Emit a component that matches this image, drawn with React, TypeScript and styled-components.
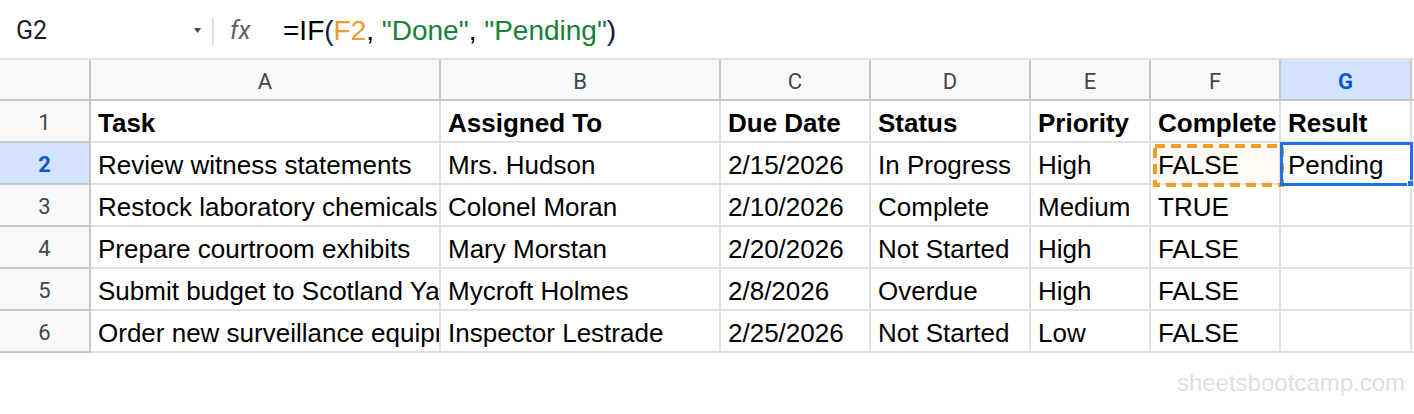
import React from "react";
import styled, { createGlobalStyle, css } from "styled-components";

const GlobalStyle = createGlobalStyle`
  html, body { margin: 0; padding: 0; background: #ffffff; }
  body { font-family: "Liberation Sans", Arial, sans-serif; }
`;

const Page = styled.div`
  width: 1414px;
  height: 414px;
  overflow: hidden;
  display: flex;
  flex-direction: column;
  background: #fff;
`;

const FormulaBar = styled.div`
  height: 58px;
  padding-top: 3px;
  box-sizing: border-box;
  display: flex;
  align-items: center;
`;

const NameBox = styled.div`
  width: 212px;
  box-sizing: border-box;
  padding: 0 11px 0 16px;
  display: flex;
  align-items: center;
  justify-content: space-between;
  font-family: Roboto, "Liberation Sans", sans-serif;
  font-size: 25px;
  color: #1f1f1f;
`;

const Separator = styled.div`
  width: 2px;
  height: 28px;
  background: #e0e0e0;
`;

const FxLabel = styled.span`
  margin-left: 16px;
  font-family: Roboto, "Liberation Sans", sans-serif;
  font-style: italic;
  font-size: 25px;
  color: #5f6368;
  width: 35px;
`;

const Formula = styled.div`
  margin-left: 18px;
  font-family: "Liberation Sans", Arial, sans-serif;
  font-size: 28px;
  color: #000;
  white-space: pre;
`;

const Tok = styled.span<{ $kind: "ref" | "str" | "paren" }>`
  color: ${(p) =>
    p.$kind === "ref" ? "#f29a2e" : p.$kind === "str" ? "#188038" : "#0d1b3e"};
`;

const Sheet = styled.div`
  display: grid;
  grid-template-columns: 91px 350px 280px 150px 160px 120px 130px 131px 2px;
  border-top: 2px solid #e1e1e1;
`;

const headerFont = css`
  font-family: Roboto, "Liberation Sans", sans-serif;
  font-size: 22px;
`;

const Corner = styled.div`
  box-sizing: border-box;
  height: 41px;
  background: #f8f9fa;
  border-right: 2px solid #c7c7c7;
  border-bottom: 2px solid #c7c7c7;
`;

const ColHeader = styled.div<{ $active?: boolean; $last?: boolean }>`
  box-sizing: border-box;
  height: 41px;
  padding-top: 4px;
  display: flex;
  align-items: center;
  justify-content: center;
  ${headerFont};
  background: ${(p) => (p.$active ? "#d3e3fd" : "#f8f9fa")};
  color: ${(p) => (p.$active ? "#0b57d0" : "#444746")};
  font-weight: ${(p) => (p.$active ? 700 : 400)};
  border-right: ${(p) => (p.$last ? "none" : "2px solid #c7c7c7")};
  border-bottom: 2px solid #c7c7c7;
`;

const RowHeader = styled.div<{ $active?: boolean }>`
  box-sizing: border-box;
  height: 42px;
  padding-top: 3px;
  display: flex;
  align-items: center;
  justify-content: center;
  ${headerFont};
  background: ${(p) => (p.$active ? "#d3e3fd" : "#f8f9fa")};
  color: ${(p) => (p.$active ? "#0b57d0" : "#444746")};
  font-weight: ${(p) => (p.$active ? 700 : 400)};
  border-right: 2px solid #c7c7c7;
  border-bottom: 2px solid #c7c7c7;
`;

const Cell = styled.div<{ $bold?: boolean; $copied?: boolean; $last?: boolean }>`
  position: relative;
  box-sizing: border-box;
  height: 42px;
  padding: 4px 0 0 7px;
  line-height: 36px;
  font-family: "Liberation Sans", Arial, sans-serif;
  font-size: 26px;
  font-weight: ${(p) => (p.$bold ? 700 : 400)};
  color: #000;
  white-space: nowrap;
  overflow: ${(p) => (p.$copied ? "visible" : "hidden")};
  background: ${(p) => (p.$copied ? "#fffaf3" : "#fff")};
  border-right: ${(p) => (p.$last ? "none" : "2px solid #e1e1e1")};
  border-bottom: 2px solid #e1e1e1;
`;

const SelectedCell = styled(Cell)`
  overflow: visible;
`;

const Clip = styled.span`
  display: block;
  overflow: hidden;
`;

const Marquee = styled.svg`
  position: absolute;
  left: 2px;
  top: 1px;
  z-index: 2;
  pointer-events: none;
`;

const Selection = styled.div`
  position: absolute;
  left: -1px;
  top: -1px;
  right: -3px;
  bottom: -3px;
  border: 3px solid #1a73e8;
  z-index: 3;
  pointer-events: none;
`;

const FillHandle = styled.div`
  position: absolute;
  right: -4px;
  bottom: -4px;
  width: 5px;
  height: 5px;
  background: #1a73e8;
  border: 1px solid #fff;
`;

const Footer = styled.div`
  display: flex;
  justify-content: flex-end;
  padding: 16px 9px 0 0;
  font-family: "Liberation Sans", Arial, sans-serif;
  font-size: 24px;
  color: #e0e0e0;
`;

const columns = ["A", "B", "C", "D", "E", "F", "G"];

const rows: string[][] = [
  ["Task", "Assigned To", "Due Date", "Status", "Priority", "Complete", "Result"],
  ["Review witness statements", "Mrs. Hudson", "2/15/2026", "In Progress", "High", "FALSE", "Pending"],
  ["Restock laboratory chemicals", "Colonel Moran", "2/10/2026", "Complete", "Medium", "TRUE", ""],
  ["Prepare courtroom exhibits", "Mary Morstan", "2/20/2026", "Not Started", "High", "FALSE", ""],
  ["Submit budget to Scotland Yard", "Mycroft Holmes", "2/8/2026", "Overdue", "High", "FALSE", ""],
  ["Order new surveillance equipment", "Inspector Lestrade", "2/25/2026", "Not Started", "Low", "FALSE", ""],
];

export default function App() {
  return (
    <>
      <GlobalStyle />
      <Page>
        <FormulaBar>
          <NameBox>
            <span>G2</span>
            <svg width="7" height="5" viewBox="0 0 7 5">
              <path d="M0 0 L7 0 L3.5 5 Z" fill="#444746" />
            </svg>
          </NameBox>
          <Separator />
          <FxLabel>fx</FxLabel>
          <Formula>
            =IF<Tok $kind="paren">(</Tok>
            <Tok $kind="ref">F2</Tok>, <Tok $kind="str">"Done"</Tok>,{" "}
            <Tok $kind="str">"Pending"</Tok>
            <Tok $kind="paren">)</Tok>
          </Formula>
        </FormulaBar>
        <Sheet>
          <Corner />
          {columns.map((c) => (
            <ColHeader key={c} $active={c === "G"}>
              {c}
            </ColHeader>
          ))}
          <ColHeader $last />
          {rows.map((r, ri) => (
            <React.Fragment key={ri}>
              <RowHeader $active={ri === 1}>{ri + 1}</RowHeader>
              {r.map((v, ci) => {
                const copied = ri === 1 && ci === 5;
                const selected = ri === 1 && ci === 6;
                if (selected) {
                  return (
                    <SelectedCell key={ci}>
                      <Clip>{v}</Clip>
                      <Selection>
                        <FillHandle />
                      </Selection>
                    </SelectedCell>
                  );
                }
                return (
                  <Cell key={ci} $bold={ri === 0} $copied={copied}>
                    {copied ? <Clip>{v}</Clip> : v}
                    {copied && (
                      <Marquee width="131" height="43" viewBox="0 0 131 43">
                        <rect
                          x="2"
                          y="2"
                          width="127"
                          height="39"
                          fill="none"
                          stroke="#f39c2a"
                          strokeWidth="4"
                          strokeDasharray="10 6"
                        />
                      </Marquee>
                    )}
                  </Cell>
                );
              })}
              <Cell $last />
            </React.Fragment>
          ))}
        </Sheet>
        <Footer>sheetsbootcamp.com</Footer>
      </Page>
    </>
  );
}
